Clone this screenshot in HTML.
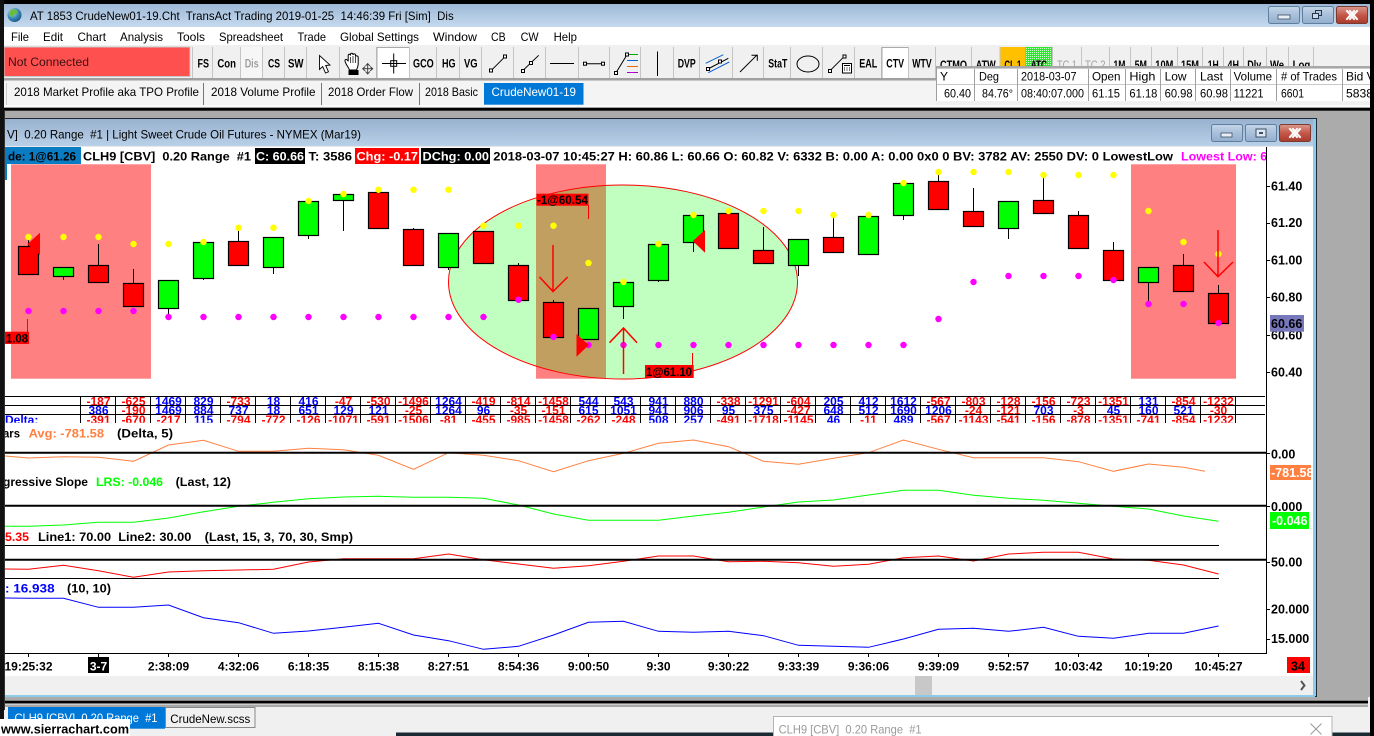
<!DOCTYPE html>
<html><head><meta charset="utf-8"><title>Sierra Chart</title>
<style>
html,body{margin:0;padding:0;background:#ababab;width:1374px;height:736px;overflow:hidden}
svg{display:block;font-family:"Liberation Sans",sans-serif;font-size:12px}
text{white-space:pre}
.b{font-weight:bold}
.t{font-weight:bold;font-size:11.5px}
.n{fill:#f00;font-weight:bold;text-anchor:middle}
.p{fill:#00f;font-weight:bold;text-anchor:middle}
.m{font-weight:bold;text-anchor:middle}
.a{font-weight:bold;font-size:12.5px}
</style></head><body>
<svg xmlns="http://www.w3.org/2000/svg" width="1374" height="736" viewBox="0 0 1374 736">
<defs>
<linearGradient id="g1" x1="0" y1="0" x2="0" y2="1"><stop offset="0" stop-color="#9db8d6"/><stop offset="1" stop-color="#c6daef"/></linearGradient>
<linearGradient id="g2" x1="0" y1="0" x2="0" y2="1"><stop offset="0" stop-color="#98b1ce"/><stop offset="1" stop-color="#b9d0e8"/></linearGradient>
<linearGradient id="bb" x1="0" y1="0" x2="0" y2="1"><stop offset="0" stop-color="#c4d5e8"/><stop offset=".5" stop-color="#a9c0da"/><stop offset="1" stop-color="#92aecd"/></linearGradient>
<linearGradient id="br" x1="0" y1="0" x2="0" y2="1"><stop offset="0" stop-color="#d99a8e"/><stop offset=".5" stop-color="#c4584a"/><stop offset="1" stop-color="#a83a2c"/></linearGradient>
<radialGradient id="gl" cx=".35" cy=".3" r=".8"><stop offset="0" stop-color="#cfe8f5"/><stop offset=".5" stop-color="#3f8fc0"/><stop offset="1" stop-color="#174f78"/></radialGradient>
<pattern id="chk" width="2" height="2" patternUnits="userSpaceOnUse"><rect width="2" height="2" fill="#2ee62e"/><rect width="1" height="1" fill="#c8ffc8"/></pattern>
<clipPath id="c1"><rect x="5" y="396" width="1262" height="9"/></clipPath>
<clipPath id="c2"><rect x="5" y="405" width="1262" height="9"/></clipPath>
<clipPath id="c3"><rect x="5" y="414" width="1262" height="8.7"/></clipPath>
<clipPath id="ce"><ellipse cx="623" cy="282" rx="174.5" ry="97"/></clipPath>
<clipPath id="ct"><rect x="936" y="45" width="380" height="21"/></clipPath>
<clipPath id="ch"><rect x="5" y="147" width="1262" height="18"/></clipPath>
<clipPath id="co"><rect x="1270" y="465" width="41" height="15"/></clipPath>
<clipPath id="cb"><rect x="1342" y="69" width="28" height="32"/></clipPath>
</defs>

<rect width="1374" height="736" fill="#ababab"/>
<!-- main title -->
<rect x="0" y="4" width="1370" height="23" fill="url(#g1)"/>
<circle cx="14.5" cy="15" r="7" fill="url(#gl)"/>
<path d="M10.500 10.500c2.500-2 5.500-1.500 6.500.5s-1 3.500-2.500 3.500-.5 3-2.500 2.500-3.200-4.500-1.500-6.500z" fill="#6dbb3c"/>
<text x="30" y="20" textLength="423.7" lengthAdjust="spacingAndGlyphs">AT 1853 CrudeNew01-19.Cht  TransAct Trading 2019-01-25  14:46:39 Fri [Sim]  Dis</text>
<g stroke="#5f7f9f" stroke-width="1">
<rect x="1268.5" y="6.5" width="31" height="17" rx="2" fill="url(#bb)"/>
<rect x="1302.5" y="6.5" width="31" height="17" rx="2" fill="url(#bb)"/>
<rect x="1336.5" y="6.5" width="31" height="17" rx="2" fill="url(#br)" stroke="#7a3a30"/>
</g>
<rect x="1278" y="15" width="12" height="4" fill="#e8eef5" stroke="#3a4f66" stroke-width=".8"/>
<path d="M1315.5 13.5v-3h6v5h-3" fill="none" stroke="#27384c"/><rect x="1312.5" y="13.5" width="6" height="5" fill="#c8d8ea" stroke="#27384c"/>
<path d="M1347 11l7 8M1354 11l-7 8M1357 11l-7 8M1350 11l7 8" stroke="#fff" stroke-width="2" fill="none" stroke-linecap="square"/>

<!-- menu -->
<rect x="0" y="27" width="1370" height="18" fill="#fff"/>
<g>
<text x="11" y="41" textLength="18" lengthAdjust="spacingAndGlyphs">File</text>
<text x="43" y="41" textLength="20" lengthAdjust="spacingAndGlyphs">Edit</text>
<text x="77.5" y="41" textLength="28.5" lengthAdjust="spacingAndGlyphs">Chart</text>
<text x="120" y="41" textLength="43" lengthAdjust="spacingAndGlyphs">Analysis</text>
<text x="177" y="41" textLength="28" lengthAdjust="spacingAndGlyphs">Tools</text>
<text x="219" y="41" textLength="64" lengthAdjust="spacingAndGlyphs">Spreadsheet</text>
<text x="297.5" y="41" textLength="28.5" lengthAdjust="spacingAndGlyphs">Trade</text>
<text x="340" y="41" textLength="79" lengthAdjust="spacingAndGlyphs">Global Settings</text>
<text x="433" y="41" textLength="44" lengthAdjust="spacingAndGlyphs">Window</text>
<text x="491" y="41" textLength="14.6" lengthAdjust="spacingAndGlyphs">CB</text>
<text x="520.6" y="41" textLength="18" lengthAdjust="spacingAndGlyphs">CW</text>
<text x="553.6" y="41" textLength="23.4" lengthAdjust="spacingAndGlyphs">Help</text>
</g>

<!-- toolbar -->
<rect x="0" y="45" width="1370" height="62" fill="#f0f0f0"/>
<rect x="4" y="47" width="186" height="29.5" fill="#ff5050" stroke="#c8c8c8"/>
<text x="8" y="66" textLength="81" lengthAdjust="spacingAndGlyphs" fill="#3a1010">Not Connected</text>
<rect x="377.5" y="47" width="31.5" height="31" fill="#fff"/>
<rect x="882.5" y="47" width="25.5" height="31" fill="#fff"/>
<rect x="240.7" y="47" width="22" height="31" fill="#f6f6f6"/>
<path d="M192.5 47v31M212.5 47v31M240.5 47v31M262.5 47v31M284.5 47v31M306.5 47v31M339.5 47v31M376.5 47v31M409.5 47v31M436.5 47v31M459.5 47v31M481.5 47v31M513.5 47v31M545.5 47v31M578.5 47v31M609.5 47v31M640.5 47v31M673.5 47v31M699.5 47v31M732.5 47v31M763.5 47v31M790.5 47v31M822.5 47v31M854.5 47v31M881.5 47v31M908.5 47v31M935.5 47v31" stroke="#c4c4c4" fill="none"/>
<path d="M377 47.5h32M377 47v31M882 47.5h26M882 47v31" stroke="#aaa" fill="none"/>
<rect x="4" y="78" width="932" height="2.5" fill="#a0a0a0"/>
<g class="t">
<text class="t" x="197.5" y="67.5" textLength="11.5" lengthAdjust="spacingAndGlyphs">FS</text>
<text class="t" x="217.4" y="67.5" textLength="18.6" lengthAdjust="spacingAndGlyphs">Con</text>
<text class="t" x="244.7" y="67.5" textLength="14" lengthAdjust="spacingAndGlyphs" fill="#a0a0a0">Dis</text>
<text class="t" x="268" y="67.5" textLength="12" lengthAdjust="spacingAndGlyphs">CS</text>
<text class="t" x="288" y="67.5" textLength="15.5" lengthAdjust="spacingAndGlyphs">SW</text>
<text class="t" x="413" y="67.5" textLength="20.7" lengthAdjust="spacingAndGlyphs">GCO</text>
<text class="t" x="442" y="67.5" textLength="13.6" lengthAdjust="spacingAndGlyphs">HG</text>
<text class="t" x="464" y="67.5" textLength="13.6" lengthAdjust="spacingAndGlyphs">VG</text>
<text class="t" x="677.7" y="67.5" textLength="18" lengthAdjust="spacingAndGlyphs">DVP</text>
<text class="t" x="768.3" y="67.5" textLength="19" lengthAdjust="spacingAndGlyphs">StaT</text>
<text class="t" x="859.3" y="67.5" textLength="18" lengthAdjust="spacingAndGlyphs">EAL</text>
<text class="t" x="886.3" y="67.5" textLength="17.7" lengthAdjust="spacingAndGlyphs">CTV</text>
<text class="t" x="912.3" y="67.5" textLength="19.4" lengthAdjust="spacingAndGlyphs">WTV</text>
</g>
<!-- toolbar icons -->
<path d="M319.5 55.5v14l3.2-3 2.8 6.5 3-1.2-2.8-6.3 4.3-.5z" fill="#fff" stroke="#000" stroke-width=".9"/>
<path d="M349.500 70c-1.500-3.500-5-7.500-4.500-9.700.4-1.500 2.300-1 3.200 1v-5.800c0-1.700 2.300-1.700 2.300 0v-1c0-1.700 2.500-1.700 2.500 0v.5c0-1.500 2.500-1.500 2.500 .2v1.500c0-1.500 2.700-1 2.700 .7v6.500c0 2-.9 4-1.700 6.100z" fill="#fff" stroke="#000"/>
<path d="M350.500 57v6M353 56v7M355.500 57v6" stroke="#000" stroke-width=".7"/>
<rect x="348.500" y="70" width="10" height="5" fill="#000"/>
<path d="M367.700 63.500v10.500M362.500 68.700h10.500M365.500 66l2.200-2.500 2.200 2.500M365.500 71.500l2.200 2.500 2.200-2.500M365.200 66.500l-2.500 2.200 2.500 2.200M370.200 66.500l2.500 2.200-2.500 2.200" fill="none" stroke="#333" stroke-width=".9"/>
<path d="M382 63.500h24M393.700 53.500v20" stroke="#000" fill="none"/>
<rect x="390.700" y="60.700" width="6" height="5.600" fill="none" stroke="#000"/>
<g fill="#fff" stroke="#000">
<path d="M491 70.700L505 56.700M522.700 70.700L538.700 55.300M585 63.700H602.700M616 72.700L627 54.700" fill="none"/>
<rect x="489.500" y="69" width="3" height="3"/><rect x="503.500" y="55" width="3" height="3"/>
<rect x="521.500" y="69.500" width="3" height="3"/><rect x="529.500" y="61.500" width="3" height="3"/>
<rect x="583.500" y="62.200" width="3" height="3"/><rect x="601.500" y="62.200" width="3" height="3"/>
</g>
<path d="M550 63.500H574" stroke="#000" fill="none"/>
<path d="M627 54.500h11" stroke="#0a0"/><path d="M627 60.500h11" stroke="#06c"/><path d="M627 66.500h11" stroke="#e60"/><path d="M627 72.500h11" stroke="#a0c"/>
<rect x="614.500" y="71.500" width="3" height="3" fill="#fff" stroke="#000"/><rect x="625.500" y="53" width="3" height="3" fill="#fff" stroke="#000"/>
<path d="M657.500 51.500V76" stroke="#000"/>
<path d="M705.700 63.300L723.300 54.700M708.300 72.700L729.300 62" stroke="#0a64d0" fill="none"/>
<path d="M708 69L728.300 58.300" stroke="#000" fill="none"/>
<rect x="706.500" y="67.500" width="3" height="3" fill="#fff" stroke="#000"/><rect x="718.500" y="60" width="3" height="3" fill="#fff" stroke="#000"/>
<path d="M740 72L757.300 54.700M751.500 55.300h5.800v5.500" fill="none" stroke="#000"/>
<ellipse cx="808" cy="64" rx="11" ry="8" fill="none" stroke="#000"/>
<path d="M830 70.700L844 56.700" stroke="#000" fill="none"/>
<rect x="828.500" y="69.500" width="3" height="3" fill="#fff" stroke="#000"/><rect x="843" y="55" width="3" height="3" fill="#fff" stroke="#000"/>
<rect x="842.500" y="63.500" width="9" height="9.500" fill="#fff" stroke="#000"/>
<path d="M844 65.500h6M844 68h1M846.500 68h1M849 68h1M844 70h1M846.500 70h1M849 70h1" stroke="#000"/>

<!-- second row buttons -->
<rect x="1000" y="47" width="25.500" height="20" fill="#ffc000"/>
<rect x="1025.500" y="47" width="26.500" height="20" fill="url(#chk)"/>
<path d="M935.500 47v20M971.500 47v20M1000 47v20M1052.500 47v20M1081.500 47v20M1109.500 47v20M1130.500 47v20M1151.500 47v20M1177.500 47v20M1202.500 47v20M1223.500 47v20M1243.500 47v20M1266.500 47v20M1288.500 47v20M1313.500 47v20" stroke="#c4c4c4" fill="none"/>
<g clip-path="url(#ct)">
<text class="t" x="940" y="69" textLength="27" lengthAdjust="spacingAndGlyphs">CTMO</text>
<text class="t" x="975.700" y="69" textLength="20" lengthAdjust="spacingAndGlyphs">ATW</text>
<text class="t" x="1004.400" y="69" textLength="17" lengthAdjust="spacingAndGlyphs">CL 1</text>
<text class="t" x="1030.800" y="69" textLength="16" lengthAdjust="spacingAndGlyphs">ATC</text>
<text x="1057" y="69" textLength="20" lengthAdjust="spacingAndGlyphs" fill="#a0a0a0">TC 1</text>
<text x="1085" y="69" textLength="20.600" lengthAdjust="spacingAndGlyphs" fill="#a0a0a0">TC 2</text>
<text class="t" x="1113.500" y="69" textLength="12" lengthAdjust="spacingAndGlyphs">1M</text>
<text class="t" x="1134.600" y="69" textLength="12.400" lengthAdjust="spacingAndGlyphs">5M</text>
<text class="t" x="1155.300" y="69" textLength="18" lengthAdjust="spacingAndGlyphs">10M</text>
<text class="t" x="1181" y="69" textLength="18" lengthAdjust="spacingAndGlyphs">15M</text>
<text class="t" x="1207.700" y="69" textLength="11" lengthAdjust="spacingAndGlyphs">1H</text>
<text class="t" x="1227.500" y="69" textLength="11.500" lengthAdjust="spacingAndGlyphs">4H</text>
<text class="t" x="1247.300" y="69" textLength="14" lengthAdjust="spacingAndGlyphs">Dly</text>
<text class="t" x="1270" y="69" textLength="14" lengthAdjust="spacingAndGlyphs">We</text>
<text class="t" x="1292.600" y="69" textLength="17.600" lengthAdjust="spacingAndGlyphs">Log</text>
</g>
<!-- info table -->
<rect x="936" y="66" width="434" height="2.700" fill="#a8a8a8"/>
<rect x="936" y="68.700" width="434" height="32.300" fill="#fff"/>
<path d="M936 84.500H1370" stroke="#c8c8c8"/>
<path d="M936.500 66v35M974.500 69v32M1017.500 69v32M1088.500 69v32M1125.500 69v32M1160.500 69v32M1195.500 69v32M1230.500 69v32M1276.500 69v32M1342.500 69v32" stroke="#a0a0a0" fill="none"/>
<g>
<text x="940" y="80.500">Y</text>
<text x="979" y="80.500" textLength="20" lengthAdjust="spacingAndGlyphs">Deg</text>
<text x="1021" y="80.500" textLength="55.500" lengthAdjust="spacingAndGlyphs">2018-03-07</text>
<text x="1092" y="80.500" textLength="28.500" lengthAdjust="spacingAndGlyphs">Open</text>
<text x="1129.400" y="80.500" textLength="26" lengthAdjust="spacingAndGlyphs">High</text>
<text x="1164.600" y="80.500" textLength="22" lengthAdjust="spacingAndGlyphs">Low</text>
<text x="1200" y="80.500" textLength="23" lengthAdjust="spacingAndGlyphs">Last</text>
<text x="1233.600" y="80.500" textLength="38.500" lengthAdjust="spacingAndGlyphs">Volume</text>
<text x="1281" y="80.500" textLength="56" lengthAdjust="spacingAndGlyphs"># of Trades</text>
<g clip-path="url(#cb)"><text x="1346" y="80.500">Bid Vol</text><text x="1346" y="97.300" textLength="27" lengthAdjust="spacingAndGlyphs">5838</text></g>
<text x="944" y="97.300" textLength="27" lengthAdjust="spacingAndGlyphs">60.40</text>
<text x="982" y="97.300" textLength="31" lengthAdjust="spacingAndGlyphs">84.76°</text>
<text x="1021" y="97.300" textLength="63" lengthAdjust="spacingAndGlyphs">08:40:07.000</text>
<text x="1092" y="97.300" textLength="28" lengthAdjust="spacingAndGlyphs">61.15</text>
<text x="1129.400" y="97.300" textLength="28" lengthAdjust="spacingAndGlyphs">61.18</text>
<text x="1164.600" y="97.300" textLength="28" lengthAdjust="spacingAndGlyphs">60.98</text>
<text x="1200" y="97.300" textLength="28" lengthAdjust="spacingAndGlyphs">60.98</text>
<text x="1233.600" y="97.300" textLength="30" lengthAdjust="spacingAndGlyphs">11221</text>
<text x="1281" y="97.300" textLength="23" lengthAdjust="spacingAndGlyphs">6601</text>
</g>

<!-- chartbook tabs -->
<rect x="4" y="81" width="932" height="24" fill="#f4f4f4"/>
<path d="M203.500 83v22M321.500 83v22M419.500 83v22" stroke="#777" fill="none"/>
<path d="M6.500 83v22" stroke="#ccc"/>
<text x="14" y="96" textLength="185" lengthAdjust="spacingAndGlyphs">2018 Market Profile aka TPO Profile</text>
<text x="211" y="96" textLength="104.500" lengthAdjust="spacingAndGlyphs">2018 Volume Profile</text>
<text x="328" y="96" textLength="85" lengthAdjust="spacingAndGlyphs">2018 Order Flow</text>
<text x="425" y="96" textLength="53" lengthAdjust="spacingAndGlyphs">2018 Basic</text>
<rect x="484" y="83" width="99.500" height="21.700" fill="#0078d7"/>
<text x="491.500" y="96" textLength="84.500" lengthAdjust="spacingAndGlyphs" fill="#fff">CrudeNew01-19</text>
<rect x="4" y="105" width="1366" height="2.700" fill="#fafafa"/>
<rect x="4" y="107.700" width="1366" height="3" fill="#000"/>

<!-- chart window -->
<rect x="0" y="118" width="1317" height="580" fill="#1f2a33"/>
<rect x="5" y="119" width="1310" height="27" fill="url(#g2)"/>
<rect x="1313" y="119" width="3" height="577" fill="#8ccbea"/>
<rect x="5" y="695" width="1310" height="2" fill="#8ccbea"/>
<text x="7" y="138.500" textLength="354" lengthAdjust="spacingAndGlyphs">V]  0.20 Range  #1 | Light Sweet Crude Oil Futures - NYMEX (Mar19)</text>
<g stroke="#5f7f9f">
<rect x="1211.500" y="124.500" width="31" height="17" rx="2" fill="url(#bb)"/>
<rect x="1245.500" y="124.500" width="31" height="17" rx="2" fill="url(#bb)"/>
<rect x="1279.500" y="124.500" width="31" height="17" rx="2" fill="url(#br)" stroke="#7a3a30"/>
</g>
<rect x="1221" y="133" width="11" height="4" fill="#e8eef5" stroke="#3a4f66" stroke-width=".8"/>
<rect x="1256" y="129" width="10" height="8" fill="#dfe8f2" stroke="#3a4f66"/><rect x="1259" y="132" width="4" height="2" fill="#3a4f66"/>
<path d="M1290 129l7 8M1297 129l-7 8M1300 129l-7 8M1293 129l7 8" stroke="#fff" stroke-width="2" fill="none" stroke-linecap="square"/>

<rect x="5" y="146" width="1308" height="1" fill="#e8e8e8"/>
<rect x="5" y="147" width="1308" height="529" fill="#fff"/>
<rect x="5" y="676" width="1308" height="19" fill="#f0f0f0"/>
<rect x="915" y="676" width="17" height="19" fill="#c8c8c8"/>
<path d="M1301 681l3.500 4.500-3.500 4.500" fill="none" stroke="#555" stroke-width="2"/>

<!-- header line -->
<rect x="5" y="147" width="76" height="17" fill="#0a7cc4"/>
<rect x="255" y="148" width="50" height="16" fill="#000"/>
<rect x="355" y="148" width="64" height="16" fill="#f00"/>
<rect x="421" y="148" width="69" height="16" fill="#000"/>
<rect x="5" y="164" width="2" height="16" fill="#0a7cc4"/>
<g clip-path="url(#ch)" class="b">
<text class="b" x="8" y="160.500" textLength="68" lengthAdjust="spacingAndGlyphs" fill="#000">de: 1@61.26</text>
<text class="b" x="83" y="160.500" textLength="168" lengthAdjust="spacingAndGlyphs">CLH9 [CBV]  0.20 Range  #1</text>
<text class="b" x="256" y="160.500" textLength="48" lengthAdjust="spacingAndGlyphs" fill="#fff">C: 60.66</text>
<text class="b" x="308.500" y="160.500" textLength="43.500" lengthAdjust="spacingAndGlyphs">T: 3586</text>
<text class="b" x="356.500" y="160.500" textLength="61.500" lengthAdjust="spacingAndGlyphs" fill="#fff">Chg: -0.17</text>
<text class="b" x="422.500" y="160.500" textLength="66.500" lengthAdjust="spacingAndGlyphs" fill="#fff">DChg: 0.00</text>
<text class="b" x="493.300" y="160.500" textLength="679.700" lengthAdjust="spacingAndGlyphs">2018-03-07 10:45:27 H: 60.86 L: 60.66 O: 60.82 V: 6332 B: 0.00 A: 0.00 0x0 0 BV: 3782 AV: 2550 DV: 0 LowestLow</text>
<text class="b" x="1181" y="160.500" fill="#f0f" textLength="110.600" lengthAdjust="spacingAndGlyphs">Lowest Low: 60.66</text>
</g>

<!-- overlays -->
<rect x="11" y="164.300" width="140" height="214.400" fill="#ff8080"/>
<rect x="536" y="164.300" width="70" height="214.400" fill="#ff8080"/>
<rect x="1131" y="164.300" width="105" height="214.400" fill="#ff8080"/>
<ellipse cx="623" cy="282" rx="174.500" ry="97" fill="#c0ffc0"/>
<rect x="536" y="164.300" width="70" height="214.400" fill="#c09f60" clip-path="url(#ce)"/>
<ellipse cx="623" cy="282" rx="174.500" ry="97" fill="none" stroke="#f00"/>

<!-- wicks -->
<path d="M28.500 240v6M63.500 276v4M98.500 244v21M133.500 269v14M168.500 308v6M203.500 278v2M238.500 231v10M273.500 267v7M308.500 235v4M343.500 200v31M413.500 228v2M448.500 267v3M518.500 263v2M553.500 300v2M623.500 306v13M658.500 280v2M693.500 242v10M763.500 227v23M798.500 265v11M833.500 218v19M903.500 215v5M938.500 175v6M973.500 188v23M1008.500 228v11M1043.500 178v22M1078.500 211v4M1113.500 242v8M1148.500 282v22M1183.500 254v11M1218.500 285v8" stroke="#000" fill="none"/>
<!-- red bodies -->
<g fill="#f00" stroke="#000" stroke-width="1.200">
<rect x="18.500" y="246.500" width="20" height="28"/>
<rect x="88.500" y="265.500" width="20" height="17"/>
<rect x="123.500" y="283.500" width="20" height="23"/>
<rect x="228.500" y="241.500" width="20" height="24"/>
<rect x="368.500" y="192.500" width="20" height="36"/>
<rect x="403.500" y="229.500" width="20" height="36"/>
<rect x="473.500" y="231.500" width="20" height="32"/>
<rect x="508.500" y="265.500" width="20" height="35"/>
<rect x="543.500" y="302.500" width="20" height="35"/>
<rect x="718.500" y="213.500" width="20" height="35"/>
<rect x="753.500" y="250.500" width="20" height="13"/>
<rect x="823.500" y="237.500" width="20" height="15"/>
<rect x="928.500" y="181.500" width="20" height="28"/>
<rect x="963.500" y="211.500" width="20" height="15"/>
<rect x="1033.500" y="200.500" width="20" height="13"/>
<rect x="1068.500" y="215.500" width="20" height="33"/>
<rect x="1103.500" y="250.500" width="20" height="30"/>
<rect x="1173.500" y="265.500" width="20" height="26"/>
<rect x="1208.500" y="293.500" width="20" height="30"/>
</g>
<!-- green bodies -->
<g fill="#0f0" stroke="#000" stroke-width="1.200">
<rect x="53.500" y="267.500" width="20" height="9"/>
<rect x="158.500" y="280.500" width="20" height="28"/>
<rect x="193.500" y="242.500" width="20" height="36"/>
<rect x="263.500" y="237.500" width="20" height="30"/>
<rect x="298.500" y="201.500" width="20" height="34"/>
<rect x="333.500" y="194.500" width="20" height="6"/>
<rect x="438.500" y="233.500" width="20" height="34"/>
<rect x="578.500" y="308.500" width="20" height="31"/>
<rect x="613.500" y="282.500" width="20" height="24"/>
<rect x="648.500" y="244.500" width="20" height="36"/>
<rect x="683.500" y="215.500" width="20" height="27"/>
<rect x="788.500" y="239.500" width="20" height="26"/>
<rect x="858.500" y="216.500" width="20" height="38"/>
<rect x="893.500" y="183.500" width="20" height="32"/>
<rect x="998.500" y="201.500" width="20" height="27"/>
<rect x="1138.500" y="267.500" width="20" height="15"/>
</g>
<!-- dots -->
<path d="M28.500 237h0M63.500 237h0M98.500 237h0M133.500 244h0M168.500 244h0M203.500 242h0M238.500 227.700h0M273.500 227.700h0M308.500 201h0M343.500 194h0M378.500 189.700h0M413.500 189.700h0M448.500 189.700h0M483.500 225.700h0M518.500 225.700h0M553.500 225.700h0M588.500 263h0M623.500 282h0M658.500 244h0M693.500 215h0M728.500 211h0M763.500 211h0M798.500 211h0M833.500 215h0M868.500 215h0M903.500 183h0M938.500 172h0M973.500 172h0M1008.500 172h0M1043.500 175h0M1078.500 175h0M1113.500 175h0M1148.500 211h0M1183.500 242h0M1218.500 254h0" stroke="#ff0" stroke-width="6.500" stroke-linecap="round" fill="none"/>
<path d="M28.500 311h0M63.500 311h0M98.500 311h0M133.500 311h0M168.500 317h0M203.500 317h0M238.500 317h0M273.500 317h0M308.500 317h0M343.500 317h0M378.500 317h0M413.500 317h0M448.500 317h0M483.500 317h0M518.500 299.700h0M553.500 337h0M588.500 345h0M623.500 345h0M658.500 345h0M693.500 345h0M728.500 345h0M763.500 345h0M798.500 345h0M833.500 345h0M868.500 345h0M903.500 345h0M938.500 319h0M973.500 282h0M1008.500 276h0M1043.500 276h0M1078.500 276h0M1113.500 280h0M1148.500 304h0M1183.500 304h0M1218.500 323h0" stroke="#f0f" stroke-width="6.500" stroke-linecap="round" fill="none"/>
<!-- arrows / triangles -->
<g stroke="#f00" stroke-width="1.500" fill="none">
<path d="M553 245v46M539.500 277L553 291.500 567.700 277"/>
<path d="M623.500 374v-46M609.500 342.700L623.500 328 637 342.700"/>
<path d="M1218 230v46.500M1204 262L1218 276.700 1233 262"/>
</g>
<path d="M40 232.700V255L27.300 244.300zM576.500 334V356.700L588.800 345zM705 230V252.700L692.800 241z" fill="#f00"/>
<!-- trade labels -->
<path d="M588.500 205v14M692.500 353v12M27.500 319v13" stroke="#f00" fill="none"/>
<rect x="536.500" y="193.700" width="52" height="12" fill="#f00"/>
<text x="537" y="204" textLength="51" lengthAdjust="spacingAndGlyphs" class="b">-1@60.54</text>
<rect x="645" y="365" width="48.700" height="13" fill="#f00"/>
<text x="646" y="376" textLength="46" lengthAdjust="spacingAndGlyphs" class="b">1@61.10</text>
<rect x="5" y="331.700" width="24" height="12.300" fill="#f00"/>
<text x="6" y="342.500" textLength="22" lengthAdjust="spacingAndGlyphs" class="b">1.08</text>

<!-- number table -->
<g clip-path="url(#c1)"><g transform="translate(0,405.500)">
<text x="98.500" class="n">-187</text><text x="133.500" class="n">-625</text><text x="168.500" class="p">1469</text><text x="203.500" class="p">829</text><text x="238.500" class="n">-733</text><text x="273.500" class="p">18</text><text x="308.500" class="p">416</text><text x="343.500" class="n">-47</text><text x="378.500" class="n">-530</text><text x="413.500" class="n">-1496</text><text x="448.500" class="p">1264</text><text x="483.500" class="n">-419</text><text x="518.500" class="n">-814</text><text x="553.500" class="n">-1458</text><text x="588.500" class="p">544</text><text x="623.500" class="p">543</text><text x="658.500" class="p">941</text><text x="693.500" class="p">880</text><text x="728.500" class="n">-338</text><text x="763.500" class="n">-1291</text><text x="798.500" class="n">-604</text><text x="833.500" class="p">205</text><text x="868.500" class="p">412</text><text x="903.500" class="p">1612</text><text x="938.500" class="n">-567</text><text x="973.500" class="n">-803</text><text x="1008.500" class="n">-128</text><text x="1043.500" class="n">-156</text><text x="1078.500" class="n">-723</text><text x="1113.500" class="n">-1351</text><text x="1148.500" class="p">131</text><text x="1183.500" class="n">-854</text><text x="1218.500" class="n">-1232</text>
</g></g>
<g clip-path="url(#c2)"><g transform="translate(0,414.500)">
<text x="98.500" class="p">386</text><text x="133.500" class="n">-190</text><text x="168.500" class="p">1469</text><text x="203.500" class="p">884</text><text x="238.500" class="p">737</text><text x="273.500" class="p">18</text><text x="308.500" class="p">651</text><text x="343.500" class="p">129</text><text x="378.500" class="p">121</text><text x="413.500" class="n">-25</text><text x="448.500" class="p">1264</text><text x="483.500" class="p">96</text><text x="518.500" class="n">-35</text><text x="553.500" class="n">-151</text><text x="588.500" class="p">615</text><text x="623.500" class="p">1051</text><text x="658.500" class="p">941</text><text x="693.500" class="p">906</text><text x="728.500" class="p">95</text><text x="763.500" class="p">375</text><text x="798.500" class="n">-427</text><text x="833.500" class="p">648</text><text x="868.500" class="p">512</text><text x="903.500" class="p">1690</text><text x="938.500" class="p">1206</text><text x="973.500" class="n">-24</text><text x="1008.500" class="n">-121</text><text x="1043.500" class="p">703</text><text x="1078.500" class="n">-3</text><text x="1113.500" class="p">45</text><text x="1148.500" class="p">160</text><text x="1183.500" class="p">521</text><text x="1218.500" class="n">-30</text>
</g></g>
<g clip-path="url(#c3)"><g transform="translate(0,424)">
<text x="5" style="fill:#00f;font-weight:bold">Delta:</text>
<text x="98.500" class="n">-391</text><text x="133.500" class="n">-670</text><text x="168.500" class="n">-217</text><text x="203.500" class="p">115</text><text x="238.500" class="n">-794</text><text x="273.500" class="n">-772</text><text x="308.500" class="n">-126</text><text x="343.500" class="n">-1071</text><text x="378.500" class="n">-591</text><text x="413.500" class="n">-1506</text><text x="448.500" class="n">-81</text><text x="483.500" class="n">-455</text><text x="518.500" class="n">-985</text><text x="553.500" class="n">-1458</text><text x="588.500" class="n">-262</text><text x="623.500" class="n">-248</text><text x="658.500" class="p">508</text><text x="693.500" class="p">257</text><text x="728.500" class="n">-491</text><text x="763.500" class="n">-1718</text><text x="798.500" class="n">-1145</text><text x="833.500" class="p">46</text><text x="868.500" class="n">-11</text><text x="903.500" class="p">489</text><text x="938.500" class="n">-567</text><text x="973.500" class="n">-1143</text><text x="1008.500" class="n">-541</text><text x="1043.500" class="n">-156</text><text x="1078.500" class="n">-878</text><text x="1113.500" class="n">-1351</text><text x="1148.500" class="n">-741</text><text x="1183.500" class="n">-854</text><text x="1218.500" class="n">-1232</text>
</g></g>
<path d="M5 396.500H1265M5 405.500H1265M5 414.500H1265" stroke="#000" fill="none"/>
<path d="M80.500 396v27M115.500 396v27M150.500 396v27M185.500 396v27M220.500 396v27M255.500 396v27M290.500 396v27M325.500 396v27M360.500 396v27M395.500 396v27M430.500 396v27M465.500 396v27M500.500 396v27M535.500 396v27M570.500 396v27M605.500 396v27M640.500 396v27M675.500 396v27M710.500 396v27M745.500 396v27M780.500 396v27M815.500 396v27M850.500 396v27M885.500 396v27M920.500 396v27M955.500 396v27M990.500 396v27M1025.500 396v27M1060.500 396v27M1095.500 396v27M1130.500 396v27M1165.500 396v27M1200.500 396v27M1235.500 396v27" stroke="#000" fill="none"/>

<!-- study labels -->
<text class="b" x="3" y="437.500" textLength="17" lengthAdjust="spacingAndGlyphs">ars</text>
<text class="b" x="28.600" y="437.500" textLength="75.400" lengthAdjust="spacingAndGlyphs" fill="#ff8040">Avg: -781.58</text>
<text class="b" x="117" y="437.500" textLength="56" lengthAdjust="spacingAndGlyphs">(Delta, 5)</text>
<text class="b" x="3" y="486" textLength="85" lengthAdjust="spacingAndGlyphs">gressive Slope</text>
<text class="b" x="96" y="486" textLength="67" lengthAdjust="spacingAndGlyphs" fill="#0f0">LRS: -0.046</text>
<text class="b" x="175.600" y="486" textLength="55.400" lengthAdjust="spacingAndGlyphs">(Last, 12)</text>
<text class="b" x="5" y="541" textLength="24" lengthAdjust="spacingAndGlyphs" fill="#f00">5.35</text>
<text class="b" x="38" y="541" textLength="153.400" lengthAdjust="spacingAndGlyphs">Line1: 70.00  Line2: 30.00</text>
<text class="b" x="204.600" y="541" textLength="148.400" lengthAdjust="spacingAndGlyphs">(Last, 15, 3, 70, 30, Smp)</text>
<text class="b" x="5" y="592.500" textLength="49.600" lengthAdjust="spacingAndGlyphs" fill="#00f">: 16.938</text>
<text class="b" x="67" y="592.500" textLength="44" lengthAdjust="spacingAndGlyphs">(10, 10)</text>

<!-- study lines -->
<polyline fill="none" stroke="#ff8040" points="5,456 28.500,458 63.500,456.700 98.500,457.300 133.500,461.300 168.500,445 203.500,440.300 238.500,451.300 273.500,451.300 308.500,448.300 343.500,449.700 378.500,455.300 413.500,469.300 448.500,452.700 483.500,455.300 518.500,460.700 553.500,471.700 588.500,460.700 623.500,453.300 658.500,443.300 693.500,440 728.500,446.700 763.500,461.300 798.500,464.300 833.500,458.300 868.500,452.700 903.500,440 938.500,449.300 973.500,457.700 1008.500,457.700 1043.500,457.700 1078.500,461.700 1113.500,471.300 1148.500,464 1183.500,467.300 1205,471.300"/>
<polyline fill="none" stroke="#0f0" points="5,526.300 28.500,526.300 63.500,525 98.500,522.300 133.500,522.300 168.500,518 203.500,511.700 238.500,506.300 273.500,502.300 308.500,498.700 343.500,497 378.500,496.300 413.500,497.300 448.500,497.300 483.500,498.300 518.500,505 553.500,514 588.500,520.300 623.500,520.300 658.500,520.300 693.500,516 728.500,512.300 763.500,507 798.500,502 833.500,500 868.500,495 903.500,490.300 938.500,490.300 973.500,495.300 1008.500,498.300 1043.500,500.300 1078.500,503.300 1113.500,506.300 1148.500,509 1183.500,516 1218.500,521.300"/>
<polyline fill="none" stroke="#f00" points="5,569 28.500,569.300 63.500,565.300 98.500,570.700 133.500,577.300 168.500,572 203.500,570.700 238.500,570 273.500,569.300 308.500,562 343.500,558.700 378.500,558.700 413.500,558.700 448.500,554 483.500,559.700 518.500,564 553.500,568.300 588.500,565.700 623.500,561.300 658.500,556 693.500,556 728.500,561.700 763.500,561.300 798.500,562.700 833.500,566.300 868.500,564.300 903.500,557.700 938.500,556 973.500,561 1008.500,554 1043.500,552.300 1078.500,552.300 1113.500,559 1148.500,560.300 1183.500,565 1218.500,574"/>
<polyline fill="none" stroke="#00f" points="5,598 28.500,598.300 63.500,598.300 98.500,607.300 133.500,607.300 168.500,605 203.500,617.700 238.500,622.700 273.500,633.300 308.500,631 343.500,627.300 378.500,623.300 413.500,635 448.500,640.700 483.500,649.300 518.500,646.300 553.500,635 588.500,622.300 623.500,621.300 658.500,631.300 693.500,632.300 728.500,631.300 763.500,635.700 798.500,645.300 833.500,646.300 868.500,647.300 903.500,639 938.500,629.300 973.500,628.300 1008.500,631.300 1043.500,627.300 1078.500,636.300 1113.500,638.300 1148.500,633.300 1183.500,633.300 1218.500,626"/>
<path d="M5 452.700H1267M5 505.700H1267M5 559.700H1267" stroke="#000" stroke-width="2" fill="none"/>
<path d="M5 545.500H1219M5 578.500H1219" stroke="#000" fill="none"/>

<!-- axes -->
<path d="M1266.500 147V653.500M5 653.500H1267" stroke="#000" fill="none"/>
<path d="M1267 186.500h3M1267 223.500h3M1267 260.500h3M1267 297.500h3M1267 335.500h3M1267 372.500h3M1267 453.500h3M1267 506.500h3M1267 562.500h3M1267 609.500h3M1267 639.500h3" stroke="#000" fill="none"/>
<path d="M28.500 653v4M98.500 653v4M168.500 653v4M238.500 653v4M308.500 653v4M378.500 653v4M448.500 653v4M518.500 653v4M588.500 653v4M658.500 653v4M728.500 653v4M798.500 653v4M868.500 653v4M938.500 653v4M1008.500 653v4M1078.500 653v4M1148.500 653v4M1218.500 653v4" stroke="#000" fill="none"/>
<g>
<text class="a" x="1271" y="190.500">61.40</text>
<text class="a" x="1271" y="227.200">61.20</text>
<text class="a" x="1271" y="264.500">61.00</text>
<text class="a" x="1271" y="301.500">60.80</text>
<text class="a" x="1271" y="339.500">60.60</text>
<text class="a" x="1271" y="376.500">60.40</text>
<rect x="1270" y="315" width="34" height="16.700" fill="#7777bb"/>
<text class="a" x="1271" y="328">60.66</text>
<text class="a" x="1271" y="458.500">0.00</text>
<rect x="1270" y="465" width="41" height="15" fill="#ff8040"/>
<g clip-path="url(#co)"><text class="a" x="1271" y="477" fill="#fff">-781.58</text></g>
<text class="a" x="1271" y="511">0.000</text>
<rect x="1270" y="512" width="39" height="17" fill="#0f0"/>
<text class="a" x="1272" y="525" fill="#fff">-0.046</text>
<text class="a" x="1271" y="566.500">50.00</text>
<text class="a" x="1271" y="613.500">20.000</text>
<text class="a" x="1271" y="643">15.000</text>
<rect x="1287" y="657" width="23" height="16" fill="#f00"/>
<text class="a" x="1291" y="670.500">34</text>
</g>
<rect x="88" y="657" width="21" height="16" fill="#000"/>
<g>
<text class="m" x="28.500" y="670.500">19:25:32</text>
<text class="m" x="98.500" y="670.500" style="fill:#fff">3-7</text>
<text class="m" x="168.500" y="670.500">2:38:09</text>
<text class="m" x="238.500" y="670.500">4:32:06</text>
<text class="m" x="308.500" y="670.500">6:18:35</text>
<text class="m" x="378.500" y="670.500">8:15:38</text>
<text class="m" x="448.500" y="670.500">8:27:51</text>
<text class="m" x="518.500" y="670.500">8:54:36</text>
<text class="m" x="588.500" y="670.500">9:00:50</text>
<text class="m" x="658.500" y="670.500">9:30</text>
<text class="m" x="728.500" y="670.500">9:30:22</text>
<text class="m" x="798.500" y="670.500">9:33:39</text>
<text class="m" x="868.500" y="670.500">9:36:06</text>
<text class="m" x="938.500" y="670.500">9:39:09</text>
<text class="m" x="1008.500" y="670.500">9:52:57</text>
<text class="m" x="1078.500" y="670.500">10:03:42</text>
<text class="m" x="1148.500" y="670.500">10:19:20</text>
<text class="m" x="1218.500" y="670.500">10:45:27</text>
</g>

<!-- bottom area -->
<rect x="0" y="697" width="1370" height="39" fill="#f0f0f0"/>
<rect x="5" y="697" width="1363" height="3.700" fill="#ababab"/>
<rect x="5" y="700.700" width="1363" height="2.800" fill="#000"/>
<rect x="5" y="704.500" width="1363" height="2.500" fill="#a8a8a8"/>
<rect x="396" y="732.500" width="978" height="3.500" fill="#1a2a33"/>
<rect x="8" y="707" width="157" height="21.700" fill="#0078d7"/>
<text x="14.500" y="722" textLength="143" lengthAdjust="spacingAndGlyphs" fill="#fff">CLH9 [CBV]  0.20 Range  #1</text>
<rect x="165.500" y="707.500" width="89.500" height="20" fill="#f0f0f0" stroke="#888"/>
<text x="170.300" y="723" textLength="80" lengthAdjust="spacingAndGlyphs">CrudeNew.scss</text>
<rect x="773.500" y="716.500" width="558.500" height="22" fill="#fff" stroke="#b4b4b4"/>
<text x="778.600" y="733.500" textLength="143" lengthAdjust="spacingAndGlyphs" fill="#9a9a9a">CLH9 [CBV]  0.20 Range  #1</text>
<path d="M1310.500 723.500l11 11M1321.500 723.500l-11 11" stroke="#999" fill="none"/>

<!-- edges -->
<rect x="0" y="0" width="1374" height="4" fill="#000"/>
<rect x="0" y="0" width="4" height="736" fill="#111"/>
<rect x="4" y="110" width="1" height="600" fill="#333"/>
<rect x="1370" y="0" width="4" height="736" fill="#000"/>
<rect x="0" y="719" width="130" height="17" fill="#fff"/>
<text x="1" y="733.500" textLength="128" lengthAdjust="spacingAndGlyphs" font-size="13" font-weight="bold">www.sierrachart.com</text>
</svg>
</body></html>
